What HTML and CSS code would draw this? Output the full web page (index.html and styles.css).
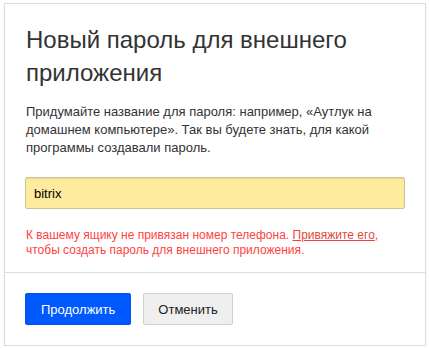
FILE: index.html
```html
<!DOCTYPE html>
<html lang="ru">
<head>
  <meta charset="UTF-8" />
  <title>Новый пароль для внешнего приложения</title>
  <link rel="stylesheet" href="styles.css">
</head>
<body>
  <div class="dialog">
    <div class="dialog-body">
      <h1>Новый пароль для внешнего приложения</h1>
      <p class="hint">Придумайте название для пароля: например, «Аутлук на домашнем компьютере». Так вы будете знать, для какой программы создавали пароль.</p>
      <input type="text" class="name-input" value="bitrix">
      <p class="error">К вашему ящику не привязан номер телефона. <a href="#">Привяжите его</a>, чтобы создать пароль для внешнего приложения.</p>
    </div>
    <div class="dialog-footer">
      <button class="btn btn-primary">Продолжить</button>
      <button class="btn btn-default">Отменить</button>
    </div>
  </div>
</body>
</html>
```

FILE: styles.css
```css
html, body {
  margin: 0; padding: 0;
  background: #fff;
}
body {
  font-family: "Liberation Sans", Arial, sans-serif;
  padding: 3px 4px 0 4px;
}

/* карточка диалога */
.dialog {
  border: 1px solid #ddd;
  box-shadow: 0 1px 2px rgba(0,0,0,0.08);
  background: #fff;
}
.dialog-body {
  padding: 19px 20px 14px 20px;
  border-bottom: 1px solid #ddd;
}
h1 {
  margin: 0 0 14px 0;
  padding-left: 1px;
  font-size: 24px;
  font-weight: normal;
  line-height: 33px;
  color: #333;
}
.hint {
  margin: 0 0 20px 0;
  padding-left: 1px;
  font-size: 13px;
  line-height: 18px;
  color: #333;
}
.name-input {
  display: block;
  box-sizing: border-box;
  width: 100%;
  height: 32px;
  margin: 0;
  padding: 0 8px;
  font-family: inherit;
  font-size: 13px;
  color: #000;
  background: #ffeb9d;
  border: 1px solid #c9c2a0;
  border-radius: 2px;
  box-shadow: inset 0 1px 1px rgba(0,0,0,0.08);
  outline: none;
}
.error {
  margin: 19px 0 0 0;
  padding-left: 1px;
  font-size: 12px;
  line-height: 15px;
  color: #ff4242;
}
.error a {
  color: #e8453c;
  text-decoration: underline;
}

/* кнопки */
.dialog-footer {
  display: flex;
  gap: 12px;
  padding: 20px;
}
.btn {
  height: 32px;
  padding: 0 15px;
  font-family: inherit;
  font-size: 13px;
  border-radius: 2px;
  cursor: pointer;
}
.btn-primary {
  background: #0059ff;
  color: #fff;
  border: 1px solid #0052ec;
}
.btn-default {
  background: #efefef;
  color: #222;
  border: 1px solid #cfcfcf;
  padding: 0 14px;
}
```
